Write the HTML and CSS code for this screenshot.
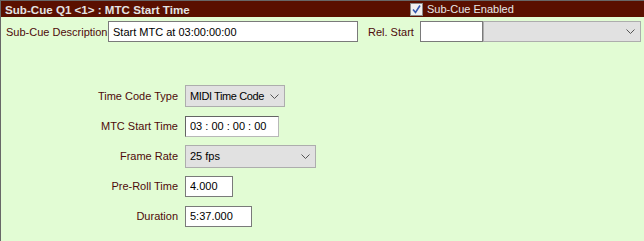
FILE: index.html
```html
<!DOCTYPE html>
<html>
<head>
    <title>Sub-Cue Q1</title>
    <link rel="stylesheet" href="styles.css">
</head>
<body>
    <div class="panel">
        <div class="header">
            <div class="title">Sub-Cue Q1 &lt;1&gt; : MTC Start Time</div>
            <label class="enabled">
                <span class="check">
                    <svg width="11" height="11" viewBox="0 0 11 11"><path d="M2 5.5 L4.5 8.5 L9 1.5" fill="none" stroke="#3358b0" stroke-width="1.6"/></svg>
                </span>
                Sub-Cue Enabled
            </label>
        </div>

        <div class="top-row">
            <span class="label desc-label">Sub-Cue Description</span>
            <input type="text" class="desc" value="Start MTC at 03:00:00:00">
            <span class="label rel">Rel. Start</span>
            <input type="text" class="rel-start" value="">
            <div class="select rel-select">
                <span></span>
                <svg width="9" height="5" viewBox="0 0 9 5"><path d="M0.5 0.5 L4.5 4.5 L8.5 0.5" fill="none" stroke="#555" stroke-width="1"/></svg>
            </div>
        </div>

        <div class="form">
            <span class="label">Time Code Type</span>
            <div class="select tc-type">
                <span>MIDI Time Code</span>
                <svg width="9" height="5" viewBox="0 0 9 5"><path d="M0.5 0.5 L4.5 4.5 L8.5 0.5" fill="none" stroke="#555" stroke-width="1"/></svg>
            </div>

            <span class="label">MTC Start Time</span>
            <input type="text" class="mtc" value="03 : 00 : 00 : 00">

            <span class="label">Frame Rate</span>
            <div class="select frame-rate">
                <span>25 fps</span>
                <svg width="9" height="5" viewBox="0 0 9 5"><path d="M0.5 0.5 L4.5 4.5 L8.5 0.5" fill="none" stroke="#555" stroke-width="1"/></svg>
            </div>

            <span class="label">Pre-Roll Time</span>
            <input type="text" class="preroll" value="4.000">

            <span class="label">Duration</span>
            <input type="text" class="duration" value="5:37.000">
        </div>
    </div>
</body>
</html>
```

FILE: styles.css
```css
html, body {
    margin: 0;
    padding: 0;
    height: 100%;
}
body {
    font-family: "Liberation Sans", Arial, sans-serif;
    font-size: 11px;
    background: #e2fcd4;
}
.panel {
    height: 100%;
    box-sizing: border-box;
    border-left: 1px solid #686868;
    border-top: 1px solid #686868;
}
.header {
    display: flex;
    align-items: center;
    height: 16px;
    background: #5a1000;
    color: #e4e4e4;
}
.title {
    width: 405px;
    flex-shrink: 0;
    padding-left: 4px;
    font-weight: bold;
    font-size: 11.6px;
    white-space: nowrap;
}
.enabled {
    display: flex;
    align-items: center;
    gap: 4px;
    color: #e8e8e8;
    white-space: nowrap;
}
.check {
    display: flex;
    align-items: center;
    justify-content: center;
    width: 11px;
    height: 11px;
    background: #f0f0f0;
    border: 1px solid #8a8a8a;
}
.label {
    color: #4e0a0a;
    white-space: nowrap;
}
.top-row {
    display: flex;
    align-items: center;
    margin-top: 4px;
    padding-left: 5px;
    height: 21px;
}
.top-row > * {
    flex-shrink: 0;
}
.desc-label {
    width: 102px;
}
input[type="text"] {
    font-family: "Liberation Sans", Arial, sans-serif;
    font-size: 11px;
    height: 21px;
    box-sizing: border-box;
    padding: 0 4px;
    margin: 0;
    border: 1px solid #7a7a7a;
    background: #fff;
    color: #000;
    outline: none;
}
.desc {
    width: 250px;
}
.rel {
    width: 52px;
    padding-left: 10px;
}
.rel-start {
    width: 63px;
}
.select {
    display: flex;
    align-items: center;
    justify-content: space-between;
    box-sizing: border-box;
    height: 22px;
    padding: 0 5px 0 4px;
    background: #e1e1e1;
    border: 1px solid #adadad;
    color: #000;
    white-space: nowrap;
}
.rel-select {
    width: 158px;
    height: 21px;
}
.form {
    display: grid;
    grid-template-columns: 177px auto;
    grid-auto-rows: 30px;
    column-gap: 7px;
    align-items: center;
    justify-items: start;
    margin-top: 39px;
}
.form .label {
    justify-self: end;
}
.tc-type {
    width: 100px;
}
.tc-type span {
    letter-spacing: -0.4px;
}
.mtc {
    width: 94px;
    border-color: #646464 #b8b8b8 #b8b8b8 #646464 !important;
}
.frame-rate {
    width: 131px;
    height: 23px;
}
.preroll {
    width: 48px;
}
.duration {
    width: 67px;
}
```
